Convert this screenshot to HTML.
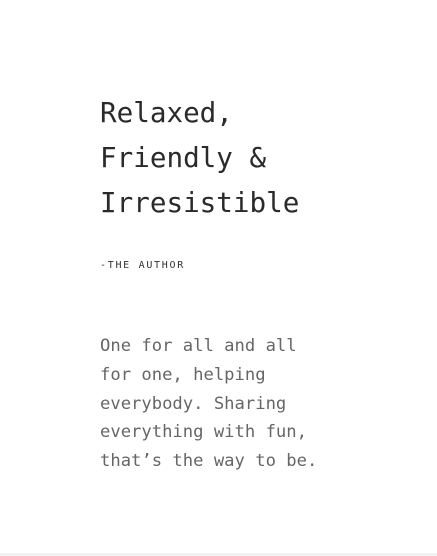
<!DOCTYPE html>
<html><head><style>
html,body{margin:0;padding:0;background:#fff;width:437px;height:556px;overflow:hidden;position:relative}
.m{font-family:"DejaVu Sans Mono","Liberation Mono",monospace;position:absolute;left:100px;white-space:pre;margin:0}
h1{font-size:27.6px;line-height:45px;top:90px;color:#2a2a2a;font-weight:normal}
.a{font-size:10px;letter-spacing:1.7px;top:259px;color:#333;line-height:14px}
p.b{font-size:17.2px;line-height:28.8px;top:332px;color:#666;font-weight:normal}
.bar{position:absolute;left:0;right:0;top:553px;height:3px;background:#f2f2f2}
</style></head><body>
<h1 class="m">Relaxed,
Friendly &amp;
Irresistible</h1>
<div class="m a">-THE AUTHOR</div>
<p class="m b">One for all and all
for one, helping
everybody. Sharing
everything with fun,
that’s the way to be.</p>
<div class="bar"></div>
</body></html>
